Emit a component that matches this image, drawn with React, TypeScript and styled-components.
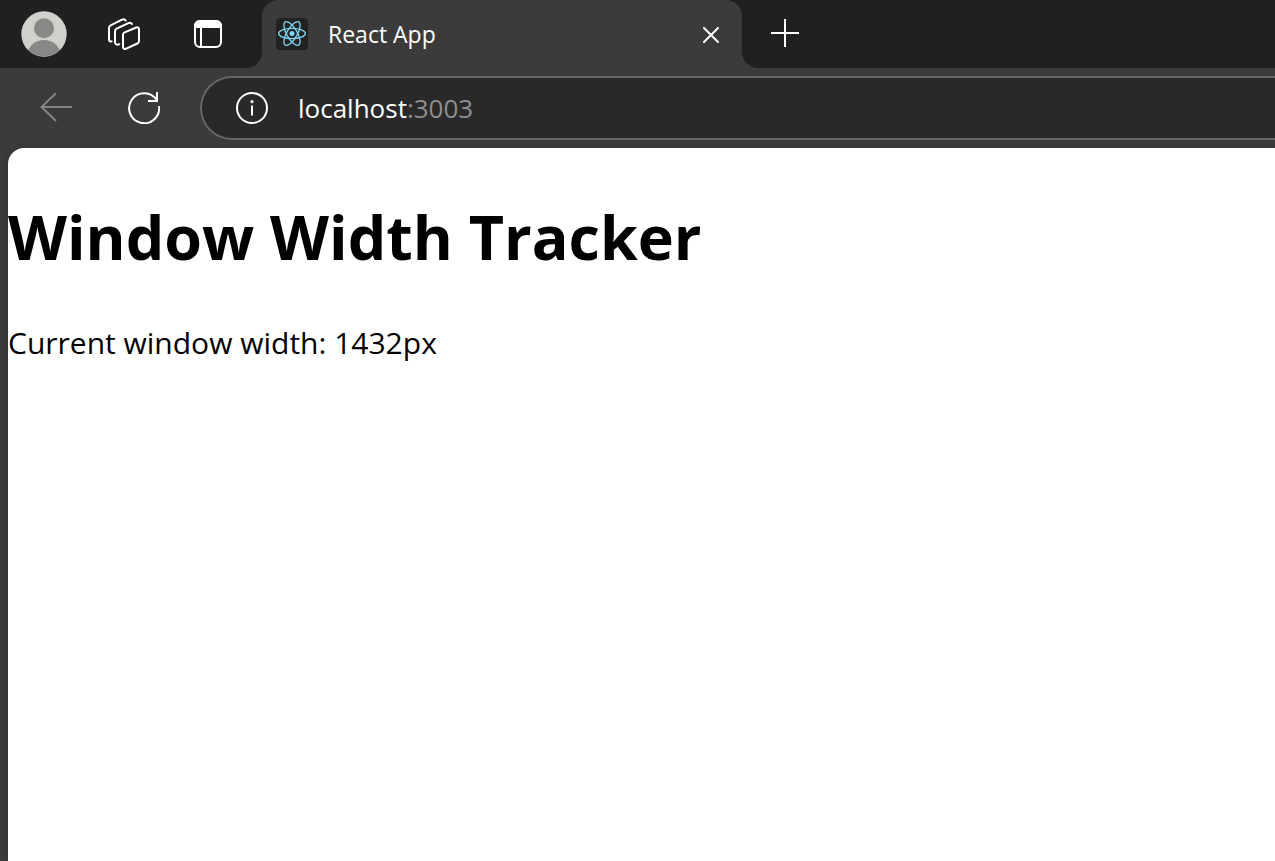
import React from "react";
import styled, { createGlobalStyle } from "styled-components";

const GlobalStyle = createGlobalStyle`
  *, *::before, *::after { box-sizing: border-box; }
  body {
    margin: 0;
    background: #3b3b3b;
    font-family: "Open Sans", "Noto Sans", sans-serif;
  }
`;

const Browser = styled.div`
  display: flex;
  flex-direction: column;
  min-height: 100vh;
  overflow-x: hidden;
  background: #3b3b3b;
`;

const TabStrip = styled.header`
  display: flex;
  height: 68px;
`;

const WindowTools = styled.div`
  display: grid;
  grid-template-columns: 88px 72px 96px;
  padding-right: 6px;
  background: #202020;
  border-bottom-right-radius: 16px;
`;

const IconButton = styled.button<{ $tone?: string }>`
  display: flex;
  align-items: center;
  justify-content: center;
  padding: 0;
  border: 0;
  background: none;
  color: ${({ $tone }) => $tone ?? "#ffffff"};
`;

const TabSlot = styled.div`
  flex: 0 1 480px;
  display: flex;
  background: #202020;
`;

const Tab = styled.div`
  flex: 1;
  display: flex;
  align-items: center;
  padding: 0 15px 0 14px;
  border-radius: 16px 16px 0 0;
  background: #3b3b3b;
`;

const TabLabel = styled.button`
  flex: 1;
  display: flex;
  align-items: center;
  gap: 20px;
  padding: 0;
  border: 0;
  background: none;
  color: #ffffff;
  font-family: inherit;
  font-size: 23px;
  line-height: 30px;
  text-align: left;
  white-space: nowrap;
`;

const CloseButton = styled(IconButton)`
  width: 32px;
  height: 32px;
`;

const StripRest = styled.div`
  flex: 1;
  display: flex;
  padding-left: 11px;
  background: #202020;
  border-bottom-left-radius: 16px;
`;

const NewTabButton = styled(IconButton)`
  width: 64px;
  height: 66px;
`;

const Toolbar = styled.nav`
  display: flex;
  align-items: center;
  height: 80px;
  padding-left: 12px;
`;

const NavButton = styled(IconButton)`
  width: 88px;
  height: 64px;
`;

const AddressBar = styled.label`
  flex: 1;
  display: flex;
  align-items: center;
  height: 64px;
  margin-left: 12px;
  padding-left: 34px;
  border: 2px solid #666666;
  border-right: 0;
  border-radius: 32px 0 0 32px;
  background: #292929;
  font-size: 26px;
  line-height: 36px;
`;

const HostInput = styled.input`
  field-sizing: content;
  margin-left: 30px;
  padding: 0;
  border: 0;
  outline: 0;
  background: none;
  color: #ffffff;
  font: inherit;
`;

const Port = styled.span`
  color: #8f8f8f;
`;

const Page = styled.main`
  flex: 1;
  margin-left: 8px;
  border-top-left-radius: 16px;
  background: #ffffff;
  box-shadow: 0 0 6px rgba(0, 0, 0, 0.2);
  color: #000000;
`;

const Title = styled.h1`
  margin: 0;
  padding-top: 48px;
  font-size: 61px;
  line-height: 82px;
  font-weight: 700;
`;

const Reading = styled.p`
  margin: 44px 0 0;
  font-size: 30px;
  line-height: 42px;
`;

const AvatarIcon = () => (
  <svg width="46" height="46" viewBox="0 0 46 46" aria-hidden="true">
    <defs>
      <clipPath id="avatar-disc">
        <circle cx="23" cy="23" r="22.5" />
      </clipPath>
    </defs>
    <circle cx="23" cy="23" r="22.7" fill="#d2d0cd" />
    <g clipPath="url(#avatar-disc)" fill="#8a8886">
      <circle cx="23" cy="17.3" r="10" />
      <circle cx="23" cy="46.5" r="17.5" />
    </g>
  </svg>
);

const CollectionsIcon = () => (
  <svg width="32" height="32" viewBox="0 0 32 32" fill="none" stroke="currentColor" strokeWidth="2" strokeLinecap="round" strokeLinejoin="round" aria-hidden="true">
    <path d="M15 16.800c0-1.100.6-2 1.600-2.400l11.800-4.900c1.400-.6 2.600.3 2.600 1.700v11.900c0 1.100-.6 2-1.600 2.400l-11.700 5.300c-1.300.5-2.700-.4-2.700-1.800z" />
    <path d="M11.200 26.200c-.5.3-1 .5-1.600.5-1.500 0-2.600-.9-2.600-2.200V13.200c0-1.100.6-2 1.600-2.500L20.400 5.100c1.300-.6 2.900-.3 3.600.9" />
    <path d="M3.600 23.400c-1.600.5-2.600-.5-2.600-1.900V9.800c0-1.100.6-2 1.600-2.500L14 1.600c1.400-.7 2.900-.3 3.600.9" />
  </svg>
);

const VerticalTabsIcon = () => (
  <svg width="32" height="32" viewBox="0 0 32 32" fill="none" stroke="currentColor" strokeWidth="2" aria-hidden="true">
    <rect x="3" y="3" width="26" height="26" rx="5" />
    <path d="M3 9V8a5 5 0 0 1 5-5h16a5 5 0 0 1 5 5v1z" fill="currentColor" />
    <path d="M9 9v20" />
  </svg>
);

const ReactIcon = () => (
  <svg width="32" height="32" viewBox="0 0 32 32" aria-hidden="true">
    <rect width="32" height="32" rx="4" fill="#222222" />
    <g fill="none" stroke="#7fd3f3" strokeWidth="1.300">
      <ellipse cx="16" cy="15.500" rx="13.400" ry="5.200" />
      <ellipse cx="16" cy="15.500" rx="13.400" ry="5.200" transform="rotate(60 16 15.5)" />
      <ellipse cx="16" cy="15.500" rx="13.400" ry="5.200" transform="rotate(120 16 15.5)" />
    </g>
    <circle cx="16" cy="15.500" r="2.500" fill="#7fd3f3" />
  </svg>
);

const CloseIcon = () => (
  <svg width="18" height="18" viewBox="0 0 18 18" fill="none" stroke="currentColor" strokeWidth="2" strokeLinecap="round" aria-hidden="true">
    <path d="M2 3l14 14M16 3L2 17" />
  </svg>
);

const PlusIcon = () => (
  <svg width="28" height="28" viewBox="0 0 28 28" fill="none" stroke="currentColor" strokeWidth="2" aria-hidden="true">
    <path d="M14 0v28M0 14h28" />
  </svg>
);

const BackIcon = () => (
  <svg width="32" height="32" viewBox="0 0 32 32" fill="none" stroke="currentColor" strokeWidth="2" aria-hidden="true">
    <path d="M32 15H1.500M16 1.300L1.500 15 16 29" />
  </svg>
);

const RefreshIcon = () => (
  <svg width="32" height="32" viewBox="0 0 32 32" fill="none" stroke="currentColor" strokeWidth="2" aria-hidden="true">
    <path d="M31 14.200A15 15 0 1 1 28.800 8.200" />
    <path d="M29 0v9h-9" />
  </svg>
);

const InfoIcon = () => (
  <svg width="32" height="32" viewBox="0 0 32 32" fill="none" stroke="#ffffff" strokeWidth="2" aria-hidden="true">
    <circle cx="16" cy="16" r="15" />
    <circle cx="16" cy="9.700" r="1.600" fill="#ffffff" stroke="none" />
    <path d="M16 13.500v10" />
  </svg>
);

const windowWidth = 1432;

export default function App() {
  return (
    <>
      <GlobalStyle />
      <Browser>
        <TabStrip>
          <WindowTools>
            <IconButton aria-label="Profile"><AvatarIcon /></IconButton>
            <IconButton aria-label="Workspaces"><CollectionsIcon /></IconButton>
            <IconButton aria-label="Tab actions"><VerticalTabsIcon /></IconButton>
          </WindowTools>
          <TabSlot>
            <Tab>
              <TabLabel><ReactIcon />React App</TabLabel>
              <CloseButton aria-label="Close tab"><CloseIcon /></CloseButton>
            </Tab>
          </TabSlot>
          <StripRest>
            <NewTabButton aria-label="New tab"><PlusIcon /></NewTabButton>
          </StripRest>
        </TabStrip>
        <Toolbar>
          <NavButton $tone="#848484" aria-label="Back"><BackIcon /></NavButton>
          <NavButton aria-label="Refresh"><RefreshIcon /></NavButton>
          <AddressBar>
            <InfoIcon />
            <HostInput type="text" aria-label="Address" defaultValue="localhost" />
            <Port>:3003</Port>
          </AddressBar>
        </Toolbar>
        <Page>
          <Title>Window Width Tracker</Title>
          <Reading>Current window width: {windowWidth}px</Reading>
        </Page>
      </Browser>
    </>
  );
}
